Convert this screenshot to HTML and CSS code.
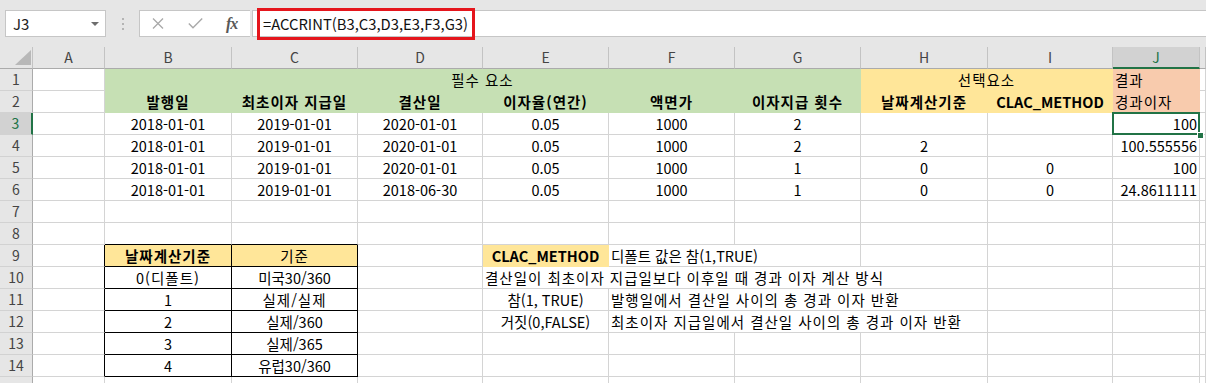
FILE: index.html
```html
<html lang="ko">
<head>
    <meta charset="UTF-8">
    <meta name="viewport" content="width=device-width, initial-scale=1.0">
    <title>ACCRINT</title>
    <link rel="stylesheet" href="styles.css">
</head>
<body>
    <div class="toolbar">
        <div class="namebox">
            <span>J3</span>
            <svg class="caret" width="8" height="4" viewBox="0 0 8 4"><polygon points="0,0 8,0 4,4" fill="#6d6d6d"/></svg>
        </div>
        <svg class="grip" width="4" height="12" viewBox="0 0 4 12">
            <rect x="1" y="0" width="2" height="2" fill="#b4b4b4"/>
            <rect x="1" y="5" width="2" height="2" fill="#b4b4b4"/>
            <rect x="1" y="10" width="2" height="2" fill="#b4b4b4"/>
        </svg>
        <div class="fbtns">
            <span class="fbtn"><svg width="12" height="11" viewBox="0 0 12 11"><path d="M1 0.5 L11 10.5 M11 0.5 L1 10.5" stroke="#a9a9a9" stroke-width="1.3" fill="none"/></svg></span>
            <span class="fbtn"><svg width="15" height="11" viewBox="0 0 15 11"><path d="M0.8 5.5 L5 9.8 L14.2 0.6" stroke="#a9a9a9" stroke-width="1.4" fill="none"/></svg></span>
            <span class="fbtn"><i class="fx">fx</i></span>
        </div>
        <div class="formula">
            <span class="fml">=ACCRINT(B3,C3,D3,E3,F3,G3)</span>
        </div>
    </div>

    <div class="sheet">
        <!-- column headers -->
        <div class="ch corner"><svg width="16" height="15" viewBox="0 0 16 15"><polygon points="16,0 16,15 0,15" fill="#b8b8b8"/></svg></div>
        <div class="ch">A</div>
        <div class="ch">B</div>
        <div class="ch">C</div>
        <div class="ch">D</div>
        <div class="ch">E</div>
        <div class="ch">F</div>
        <div class="ch">G</div>
        <div class="ch">H</div>
        <div class="ch">I</div>
        <div class="ch on">J</div>
        <div class="ch"></div>

        <!-- 1 -->
        <div class="rh">1</div>
        <div></div>
        <div class="green span6 ko">필수 요소</div>
        <div class="yellow span2 ko">선택요소</div>
        <div class="peach left ko">결과</div>
        <div></div>

        <!-- 2 -->
        <div class="rh">2</div>
        <div></div>
        <div class="green b ko">발행일</div>
        <div class="green b ko">최초이자 지급일</div>
        <div class="green b ko">결산일</div>
        <div class="green b ko">이자율(연간)</div>
        <div class="green b ko">액면가</div>
        <div class="green b ko">이자지급 횟수</div>
        <div class="yellow b ko">날짜계산기준</div>
        <div class="yellow b">CLAC_METHOD</div>
        <div class="peach left ko">경과이자</div>
        <div></div>

        <!-- 3 -->
        <div class="rh on">3</div>
        <div></div>
        <div>2018-01-01</div>
        <div>2019-01-01</div>
        <div>2020-01-01</div>
        <div>0.05</div>
        <div>1000</div>
        <div>2</div>
        <div></div>
        <div></div>
        <div class="right sel">100</div>
        <div></div>

        <!-- 4 -->
        <div class="rh">4</div>
        <div></div>
        <div>2018-01-01</div>
        <div>2019-01-01</div>
        <div>2020-01-01</div>
        <div>0.05</div>
        <div>1000</div>
        <div>2</div>
        <div>2</div>
        <div></div>
        <div class="right">100.555556</div>
        <div></div>

        <!-- 5 -->
        <div class="rh">5</div>
        <div></div>
        <div>2018-01-01</div>
        <div>2019-01-01</div>
        <div>2020-01-01</div>
        <div>0.05</div>
        <div>1000</div>
        <div>1</div>
        <div>0</div>
        <div>0</div>
        <div class="right">100</div>
        <div></div>

        <!-- 6 -->
        <div class="rh">6</div>
        <div></div>
        <div>2018-01-01</div>
        <div>2019-01-01</div>
        <div>2018-06-30</div>
        <div>0.05</div>
        <div>1000</div>
        <div>1</div>
        <div>0</div>
        <div>0</div>
        <div class="right">24.8611111</div>
        <div></div>

        <!-- 7 -->
        <div class="rh">7</div>
        <div></div><div></div><div></div><div></div><div></div><div></div><div></div><div></div><div></div><div></div><div></div>

        <!-- 8 -->
        <div class="rh">8</div>
        <div></div>
        <div class="edge-b"></div>
        <div class="edge-b"></div>
        <div></div><div></div><div></div><div></div><div></div><div></div><div></div><div></div>

        <!-- 9 -->
        <div class="rh">9</div>
        <div class="edge-r"></div>
        <div class="box yellow b ko">날짜계산기준</div>
        <div class="box yellow ko">기준</div>
        <div></div>
        <div class="yellow b">CLAC_METHOD</div>
        <div class="span2 left">디폴트 값은 참(1,TRUE)</div>
        <div></div><div></div><div></div><div></div>

        <!-- 10 -->
        <div class="rh">10</div>
        <div class="edge-r"></div>
        <div class="box ko">0(디폴트)</div>
        <div class="box">미국30/360</div>
        <div></div>
        <div class="span4 left ko">결산일이 최초이자 지급일보다 이후일 때 경과 이자 계산 방식</div>
        <div></div><div></div><div></div>

        <!-- 11 -->
        <div class="rh">11</div>
        <div class="edge-r"></div>
        <div class="box">1</div>
        <div class="box ko">실제/실제</div>
        <div></div>
        <div>참(1, TRUE)</div>
        <div class="span3 left ko">발행일에서 결산일 사이의 총 경과 이자 반환</div>
        <div></div><div></div><div></div>

        <!-- 12 -->
        <div class="rh">12</div>
        <div class="edge-r"></div>
        <div class="box">2</div>
        <div class="box">실제/360</div>
        <div></div>
        <div>거짓(0,FALSE)</div>
        <div class="span3 left ko">최초이자 지급일에서 결산일 사이의 총 경과 이자 반환</div>
        <div></div><div></div><div></div>

        <!-- 13 -->
        <div class="rh">13</div>
        <div class="edge-r"></div>
        <div class="box">3</div>
        <div class="box">실제/365</div>
        <div></div><div></div><div></div><div></div><div></div><div></div><div></div><div></div>

        <!-- 14 -->
        <div class="rh">14</div>
        <div class="edge-r"></div>
        <div class="box">4</div>
        <div class="box">유럽30/360</div>
        <div></div><div></div><div></div><div></div><div></div><div></div><div></div><div></div>

        <!-- 15 -->
        <div class="rh"></div>
        <div></div><div></div><div></div><div></div><div></div><div></div><div></div><div></div><div></div><div></div><div></div>
    </div>
</body>
</html>
```

FILE: styles.css
```css
body { margin: 0; width: 1206px; height: 383px; overflow: hidden; background: #fff; font-family: "Noto Sans CJK KR", "Noto Sans", sans-serif; }

/* formula bar */
.toolbar { display: flex; align-items: center; height: 47px; background: #e6e6e6; padding-left: 5px; box-sizing: border-box; }
.namebox { display: flex; align-items: center; justify-content: space-between; box-sizing: border-box; width: 101px; height: 27px; background: #fff; border: 1px solid #c6c6c6; padding: 0 6px 0 7px; font-size: 15px; color: #222; }
.grip { margin: 0 14px 0 15px; }
.fbtns { display: flex; box-sizing: border-box; width: 111px; height: 27px; background: #fff; border: 1px solid #c6c6c6; border-right: none; }
.fbtn { flex: 1; display: flex; align-items: center; justify-content: center; }
.fx { font-family: "Liberation Serif", serif; font-size: 16px; font-style: italic; font-weight: bold; color: #595959; letter-spacing: -1px; }
.formula { flex: 1; display: flex; align-items: center; box-sizing: border-box; height: 27px; background: #fff; border: 1px solid #c6c6c6; border-right: none; margin-left: 2px; padding-left: 4px; }
.fml { display: inline-block; box-sizing: border-box; width: 218px; height: 32px; line-height: 26px; border: 3px solid #e5161d; padding-left: 3px; font-size: 14.8px; color: #111; white-space: nowrap; }

/* grid */
.sheet { display: grid; grid-template-columns: 33px 72px 127px 126px 125px 126px 126px 126px 127px 125px 87px 1fr; grid-auto-rows: 22px; }
.sheet > div { box-sizing: border-box; border-right: 1px solid #d4d4d4; border-bottom: 1px solid #d4d4d4; padding: 0 2px; font-size: 14.5px; line-height: 21px; text-align: center; white-space: nowrap; overflow: hidden; color: #000; }
.sheet > .ko { letter-spacing: 1px; }

.sheet > .ch { background: #e6e6e6; color: #444; font-size: 14px; border-right-color: #c3c3c3; border-bottom-color: #ababab; }
.sheet > .rh { background: #e6e6e6; color: #444; font-size: 14px; border-right-color: #ababab; border-bottom-color: #d2d2d2; }
.sheet > .corner { display: flex; align-items: flex-end; justify-content: flex-end; padding: 0 1px 3px 0; }
.sheet > .ch.on { background: #d2d2d2; color: #217346; border-bottom: 2px solid #217346; }
.sheet > .rh.on { background: #d2d2d2; color: #217346; border-right: 2px solid #217346; }

.span2 { grid-column: span 2; }
.span3 { grid-column: span 3; }
.span4 { grid-column: span 4; }
.span6 { grid-column: span 6; }

.sheet > .left { text-align: left; }
.sheet > .right { text-align: right; }
.b { font-weight: bold; }

.sheet > .green { background: #c6e0b4; border-color: #c6e0b4; }
.sheet > .yellow { background: #ffe699; border-color: #ffe699; }
.sheet > .peach { background: #f8cbad; border-color: #f8cbad; }

.sheet > .box { border-right-color: #000; border-bottom-color: #000; }
.sheet > .edge-r { border-right-color: #000; }
.sheet > .edge-b { border-bottom-color: #000; }

.sheet > .sel { position: relative; overflow: visible; }
.sel::after { content: ""; position: absolute; top: -1px; left: -1px; right: -1px; bottom: -1px; border: 2px solid #217346; }
.sel::before { content: ""; position: absolute; right: -5px; bottom: -5px; width: 5px; height: 5px; background: #217346; border: 1px solid #fff; z-index: 1; }
```
